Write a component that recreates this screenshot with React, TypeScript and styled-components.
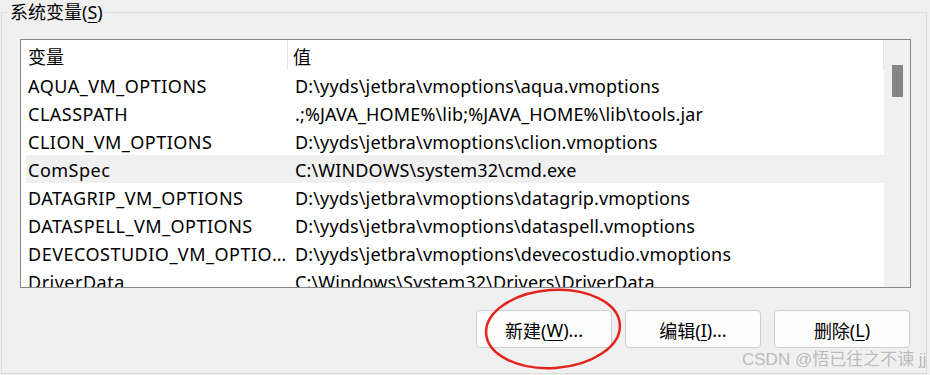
import React from "react";
import styled, { createGlobalStyle } from "styled-components";

const GlobalStyle = createGlobalStyle`
  html, body { margin: 0; padding: 0; background: #f0f0f0; }
  body { font-family: "Noto Sans", "Noto Sans CJK SC", sans-serif; color: #000; }
`;

const Page = styled.div`
  position: relative;
  width: 930px;
  height: 375px;
  overflow: hidden;
  background: #f0f0f0;
`;

const Group = styled.div`
  position: relative;
  margin: 12px 0 0 1px;
  width: 926px;
  height: 362px;
  box-sizing: border-box;
  border: 1px solid #dcdcdc;
  padding: 26px 15px 0 18px;
  display: flex;
  flex-direction: column;
`;

const GroupTitle = styled.div`
  position: absolute;
  top: -13px;
  left: 6px;
  padding: 0 2px;
  background: #f0f0f0;
  font-size: 18px;
  line-height: 24px;
`;

const ListBox = styled.div`
  height: 249px;
  box-sizing: border-box;
  border: 1px solid #828790;
  background: #fff;
  display: flex;
  overflow: hidden;
`;

const ListContent = styled.div`
  flex: 1;
  min-width: 0;
  display: flex;
  flex-direction: column;
  overflow: hidden;
`;

const Header = styled.div`
  display: flex;
  height: 31px;
  flex-shrink: 0;
`;

const HeaderCell = styled.div<{ $w?: number }>`
  ${(p) => (p.$w ? `width: ${p.$w}px;` : "flex: 1;")}
  box-sizing: border-box;
  padding: 2px 0 0 ${(p) => (p.$w ? 7 : 5)}px;
  font-size: 18px;
  line-height: 30px;
  border-right: 1px solid #e5e5e5;
  height: 30px;
`;

const Row = styled.div<{ $sel?: boolean }>`
  display: flex;
  height: 28px;
  flex-shrink: 0;
  margin-left: 5px;
  background: ${(p) => (p.$sel ? "#f0f0f0" : "transparent")};
  font-size: 18px;
  letter-spacing: 0.15px;
  line-height: 30px;
`;

const NameCell = styled.div`
  width: 267px;
  box-sizing: border-box;
  padding: 0 6px 0 2px;
  white-space: nowrap;
  overflow: hidden;
  text-overflow: ellipsis;
  letter-spacing: 0.5px;
`;

const ValueCell = styled.div`
  flex: 1;
  padding-left: 2px;
  white-space: nowrap;
  overflow: hidden;
`;

const ScrollTrack = styled.div`
  width: 26px;
  flex-shrink: 0;
  background: #f0f0f0;
  padding: 25px 0 0 8px;
  box-sizing: border-box;
`;

const ScrollThumb = styled.div`
  width: 11px;
  height: 32px;
  background: #858585;
`;

const ButtonRow = styled.div`
  display: flex;
  justify-content: flex-end;
  gap: 13px;
  margin-top: 22px;
  padding-right: 1px;
`;

const Button = styled.div`
  width: 136px;
  height: 38px;
  box-sizing: border-box;
  border: 1px solid #d0d0d0;
  border-radius: 4px;
  background: #fdfdfd;
  display: flex;
  align-items: center;
  justify-content: center;
  font-size: 18px;
  padding-top: 1px;
`;

const Key = styled.span`
  text-decoration: underline;
  text-underline-offset: 3px;
`;

const Circle = styled.svg`
  position: absolute;
  left: 480px;
  top: 285px;
  width: 150px;
  height: 90px;
  pointer-events: none;
`;

const Watermark = styled.div`
  position: absolute;
  left: 742px;
  top: 348px;
  font-size: 17px;
  line-height: 24px;
  color: rgba(140, 140, 140, 0.55);
  white-space: nowrap;
  font-family: "Liberation Sans", "Noto Sans CJK SC", sans-serif;
`;

const rows: [string, string][] = [
  ["AQUA_VM_OPTIONS", "D:\\yyds\\jetbra\\vmoptions\\aqua.vmoptions"],
  ["CLASSPATH", ".;%JAVA_HOME%\\lib;%JAVA_HOME%\\lib\\tools.jar"],
  ["CLION_VM_OPTIONS", "D:\\yyds\\jetbra\\vmoptions\\clion.vmoptions"],
  ["ComSpec", "C:\\WINDOWS\\system32\\cmd.exe"],
  ["DATAGRIP_VM_OPTIONS", "D:\\yyds\\jetbra\\vmoptions\\datagrip.vmoptions"],
  ["DATASPELL_VM_OPTIONS", "D:\\yyds\\jetbra\\vmoptions\\dataspell.vmoptions"],
  ["DEVECOSTUDIO_VM_OPTIONS", "D:\\yyds\\jetbra\\vmoptions\\devecostudio.vmoptions"],
  ["DriverData", "C:\\Windows\\System32\\Drivers\\DriverData"],
];

export default function App() {
  return (
    <Page>
      <GlobalStyle />
      <Group>
        <GroupTitle>
          系统变量(<Key>S</Key>)
        </GroupTitle>
        <ListBox>
          <ListContent>
            <Header>
              <HeaderCell $w={267}>变量</HeaderCell>
              <HeaderCell>值</HeaderCell>
            </Header>
            {rows.map(([n, v], i) => (
              <Row key={n} $sel={i === 3}>
                <NameCell>{n}</NameCell>
                <ValueCell>{v}</ValueCell>
              </Row>
            ))}
          </ListContent>
          <ScrollTrack>
            <ScrollThumb />
          </ScrollTrack>
        </ListBox>
        <ButtonRow>
          <Button>
            新建(<Key>W</Key>)...
          </Button>
          <Button>
            编辑(<Key>I</Key>)...
          </Button>
          <Button>
            删除(<Key>L</Key>)
          </Button>
        </ButtonRow>
      </Group>
      <Circle viewBox="0 0 150 90">
        <ellipse cx="73" cy="44" rx="67" ry="39" fill="none" stroke="#e5231d" strokeWidth="2.5" transform="rotate(-4 73 44)" />
      </Circle>
      <Watermark>CSDN @悟已往之不谏 jj</Watermark>
    </Page>
  );
}
